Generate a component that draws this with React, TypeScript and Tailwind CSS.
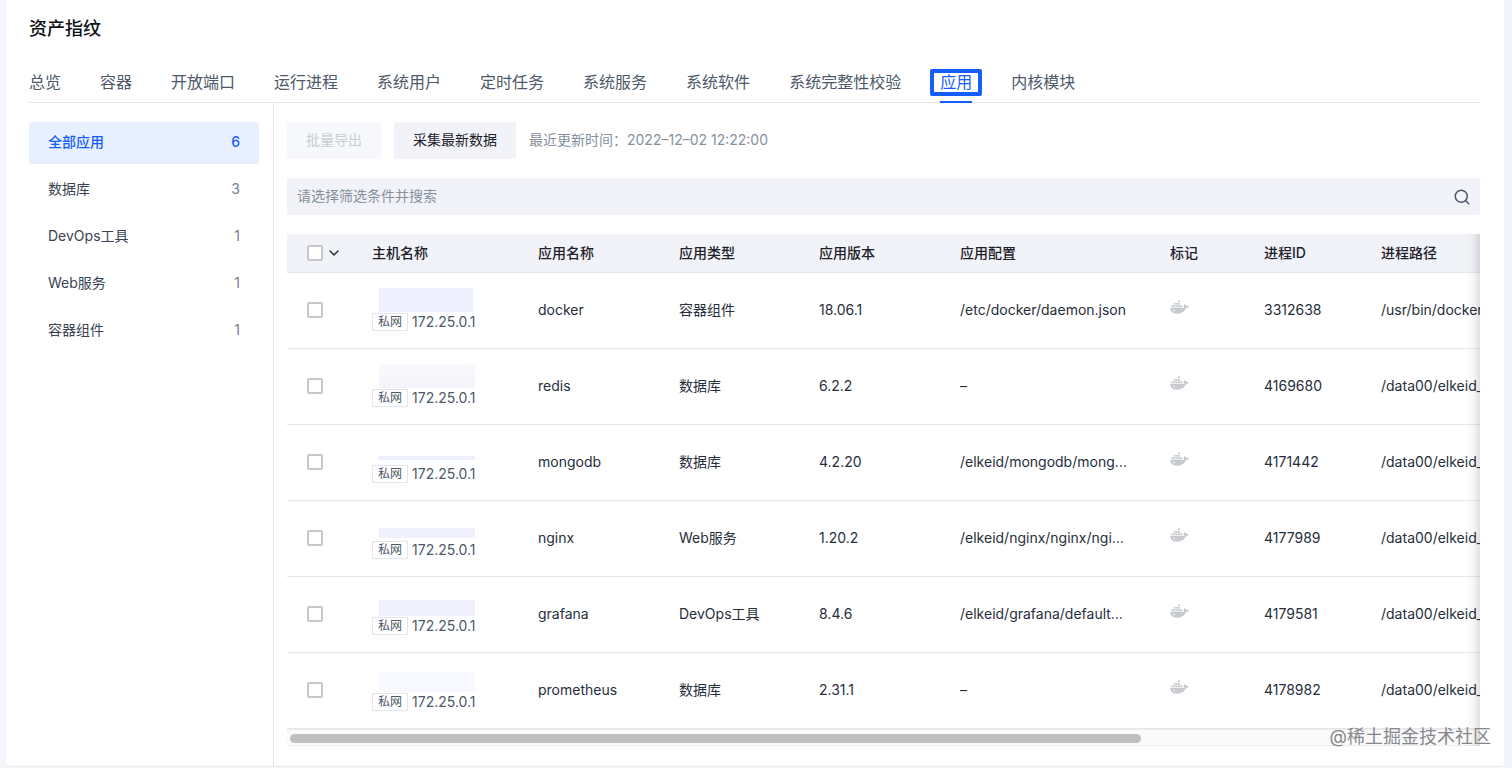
import { useState } from "react";
import { ChevronDown, Search } from "lucide-react";

const tabs = [
  "总览",
  "容器",
  "开放端口",
  "运行进程",
  "系统用户",
  "定时任务",
  "系统服务",
  "系统软件",
  "系统完整性校验",
  "应用",
  "内核模块",
];

const categories = [
  { name: "全部应用", count: 6 },
  { name: "数据库", count: 3 },
  { name: "DevOps工具", count: 1 },
  { name: "Web服务", count: 1 },
  { name: "容器组件", count: 1 },
];

const columns = [
  { title: "主机名称", width: "w-[166px]" },
  { title: "应用名称", width: "w-[141px]" },
  { title: "应用类型", width: "w-[140px]" },
  { title: "应用版本", width: "w-[141px]" },
  { title: "应用配置", width: "w-[210px]" },
  { title: "标记", width: "w-[94px]" },
  { title: "进程ID", width: "w-[117px]" },
  { title: "进程路径", width: "w-[596px]" },
];

interface AppRow {
  name: string;
  type: string;
  version: string;
  config: string;
  pid: string;
  path: string;
  mask: string;
}

// mask is the shape and tint of the redacted host name
const rows: AppRow[] = [
  {
    name: "docker",
    type: "容器组件",
    version: "18.06.1",
    config: "/etc/docker/daemon.json",
    pid: "3312638",
    path: "/usr/bin/dockerd",
    mask: "h-6 w-[94px] bg-[#eef0fd]",
  },
  {
    name: "redis",
    type: "数据库",
    version: "6.2.2",
    config: "–",
    pid: "4169680",
    path: "/data00/elkeid_redis/redis-server",
    mask: "h-6 w-24 bg-linear-to-b from-[#fafafe] to-[#f3f4fa]",
  },
  {
    name: "mongodb",
    type: "数据库",
    version: "4.2.20",
    config: "/elkeid/mongodb/mongod.conf",
    pid: "4171442",
    path: "/data00/elkeid_mongodb/mongod",
    mask: "mb-1 h-1 w-24 bg-[#eff0fd]",
  },
  {
    name: "nginx",
    type: "Web服务",
    version: "1.20.2",
    config: "/elkeid/nginx/nginx/nginx.conf",
    pid: "4177989",
    path: "/data00/elkeid_nginx/nginx",
    mask: "mb-0.5 h-2.5 w-24 bg-[#f0f1fd]",
  },
  {
    name: "grafana",
    type: "DevOps工具",
    version: "8.4.6",
    config: "/elkeid/grafana/defaults.ini",
    pid: "4179581",
    path: "/data00/elkeid_grafana/grafana-server",
    mask: "h-4 w-24 bg-[#f0f1fd]",
  },
  {
    name: "prometheus",
    type: "数据库",
    version: "2.31.1",
    config: "–",
    pid: "4178982",
    path: "/data00/elkeid_prometheus/prometheus",
    mask: "h-5 w-24 bg-[#f8f9fe]",
  },
];

function DockerIcon() {
  return (
    <svg
      viewBox="0 0 57 42"
      className="h-3.5 w-[19px] text-[#c6c9cd]"
      fill="currentColor"
      aria-hidden="true"
    >
      <rect x="24" y="1" width="6" height="5" />
      <rect x="11" y="9" width="6" height="5" />
      <rect x="18" y="9" width="5" height="5" />
      <rect x="24" y="9" width="6" height="5" />
      <rect x="4" y="16" width="6" height="6" />
      <rect x="11" y="16" width="6" height="6" />
      <rect x="18" y="16" width="5" height="6" />
      <rect x="24" y="16" width="6" height="6" />
      <rect x="31" y="16" width="6" height="6" />
      <path
        fillRule="evenodd"
        d="M1 24h36c3 0 5-1 6-2c-2-3-2-7 1-10c3 2 4 4 5 6c3-1 6 0 8 1c-2 4-5 5-9 5c-5 11-13 17-27 17C7 41 1 34 1 24zM12 29a2.5 2.5 0 1 0 0 5a2.5 2.5 0 0 0 0-5z"
      />
    </svg>
  );
}

function Checkbox({
  label,
  checked,
  onChange,
}: {
  label: string;
  checked: boolean;
  onChange: () => void;
}) {
  return (
    <input
      type="checkbox"
      aria-label={label}
      checked={checked}
      onChange={onChange}
      className="block size-4 shrink-0 appearance-none rounded-xs border-2 border-[#c6c8cc] bg-white checked:border-[#165dff] checked:bg-[#165dff]"
    />
  );
}

function Tabs() {
  const [active, setActive] = useState("应用");

  return (
    <nav className="mt-[19px] flex gap-[39px] border-b border-[#e5e6eb]">
      {tabs.map((tab) => (
        <button
          key={tab}
          onClick={() => setActive(tab)}
          className={`relative h-10 whitespace-nowrap text-base ${
            tab === active ? "text-[#165dff]" : "text-[#4e5969]"
          }`}
        >
          {tab}
          {tab === active && (
            <>
              <span className="absolute -inset-x-2.5 top-[7px] h-[27px] rounded-xs border-4 border-[#165dff]" />
              <span className="absolute inset-x-0 -bottom-px h-0.5 bg-[#165dff]" />
            </>
          )}
        </button>
      ))}
    </nav>
  );
}

function Sidebar() {
  const [active, setActive] = useState("全部应用");

  return (
    <aside className="w-[245px] shrink-0 border-r border-[#e5e6eb] pt-[19px] pr-3.5">
      <ul className="flex flex-col gap-[5px]">
        {categories.map(({ name, count }) => (
          <li key={name}>
            <button
              onClick={() => setActive(name)}
              className={`flex h-[42px] w-full items-center justify-between rounded px-[19px] pb-0.5 text-sm ${
                name === active
                  ? "bg-[#e8efff] font-medium text-[#165dff]"
                  : "text-[#3a4352]"
              }`}
            >
              <span>{name}</span>
              <span className={name === active ? "" : "text-[#78808c]"}>
                {count}
              </span>
            </button>
          </li>
        ))}
      </ul>
    </aside>
  );
}

function AppTable() {
  const [selected, setSelected] = useState<string[]>([]);

  function toggle(name: string) {
    setSelected((cur) =>
      cur.includes(name) ? cur.filter((n) => n !== name) : [...cur, name],
    );
  }

  return (
    <div className="relative mt-[19px]">
      <div className="overflow-hidden">
        <table className="w-[1671px] table-fixed border-collapse text-left text-sm text-[#272e3b]">
          <thead>
            <tr className="h-[38px] border-b border-[#e5e6eb] bg-[#f2f3f8] text-[#1d2129]">
              <th className="w-[66px] pl-5">
                <div className="flex items-center gap-[3px]">
                  <Checkbox
                    label="全选"
                    checked={selected.length === rows.length}
                    onChange={() =>
                      setSelected(
                        selected.length === rows.length
                          ? []
                          : rows.map((row) => row.name),
                      )
                    }
                  />
                  <ChevronDown size={16} strokeWidth={2} />
                </div>
              </th>
              {columns.map((col) => (
                <th key={col.title} className={`${col.width} px-[19px] font-medium`}>
                  {col.title}
                </th>
              ))}
            </tr>
          </thead>
          <tbody>
            {rows.map((row) => (
              <tr key={row.name} className="h-[76px] border-b border-[#e5e6eb]">
                <td className="pl-5">
                  <Checkbox
                    label={row.name}
                    checked={selected.includes(row.name)}
                    onChange={() => toggle(row.name)}
                  />
                </td>
                <td className="px-[19px]">
                  <div className="flex h-11 flex-col justify-end">
                    <div className={`ml-[7px] ${row.mask}`} />
                    <div className="flex items-center gap-1 whitespace-nowrap text-[#4e5969]">
                      <span className="border border-[#e5e6eb] bg-white px-[5px] text-xs leading-4">
                        私网
                      </span>
                      <span>172.25.0.1</span>
                    </div>
                  </div>
                </td>
                <td className="px-[19px]">{row.name}</td>
                <td className="px-[19px]">{row.type}</td>
                <td className="px-[19px]">{row.version}</td>
                <td className="truncate pr-6 pl-[19px]">{row.config}</td>
                <td className="px-[19px] pb-1.5">
                  <DockerIcon />
                </td>
                <td className="px-[19px]">{row.pid}</td>
                <td className="px-[19px]">{row.path}</td>
              </tr>
            ))}
          </tbody>
        </table>
      </div>
      <div className="h-[17px] border-y border-[#ececec] bg-[#fafafa] px-[3px] pt-1">
        <div className="h-[9px] w-[71.7%] rounded-full bg-[#bfbfbf]" />
      </div>
      {/* fade over the clipped columns */}
      <div className="pointer-events-none absolute inset-y-0 right-0 w-3.5 bg-linear-to-r from-transparent via-black/3 to-black/12" />
    </div>
  );
}

export default function App() {
  return (
    <div className="flex min-h-screen bg-[#f4f5fa] pr-2 pb-0.5 pl-1.5 font-[Inter,'Noto_Sans_CJK_SC',sans-serif]">
      <div className="flex min-w-0 flex-1 flex-col rounded-b border-b border-[#e9eaef] bg-white pt-[15px] pr-6 pl-[23px]">
        <h1 className="text-lg leading-7 font-medium text-[#0f1217]">资产指纹</h1>
        <Tabs />
        <div className="flex flex-1">
          <Sidebar />
          <main className="min-w-0 flex-1 pt-[19px] pb-5 pl-[13px]">
            <div className="flex items-center gap-[13px] text-sm">
              <button
                disabled
                className="h-[37px] rounded-xs bg-[#f7f8fb] px-[19px] pb-0.5 text-[#c9cdd4]"
              >
                批量导出
              </button>
              <button className="h-[37px] rounded-xs bg-[#f2f3f8] px-[19px] pb-0.5 text-[#1d2129]">
                采集最新数据
              </button>
              <p className="pb-0.5 text-[#86909c]">
                最近更新时间：2022–12–02 12:22:00
              </p>
            </div>
            <label className="mt-[19px] flex h-[37px] items-center rounded-xs bg-[#f2f3f8] pr-[9px] pl-2.5">
              <input
                type="text"
                aria-label="搜索"
                placeholder="请选择筛选条件并搜索"
                className="min-w-0 flex-1 pb-0.5 text-sm outline-none placeholder:text-[#86909c]"
              />
              <Search size={18} className="text-[#4e5969]" />
            </label>
            <AppTable />
          </main>
        </div>
      </div>
      <span className="pointer-events-none absolute right-[21px] bottom-[17px] text-lg text-[#86888c]">
        @稀土掘金技术社区
      </span>
    </div>
  );
}
